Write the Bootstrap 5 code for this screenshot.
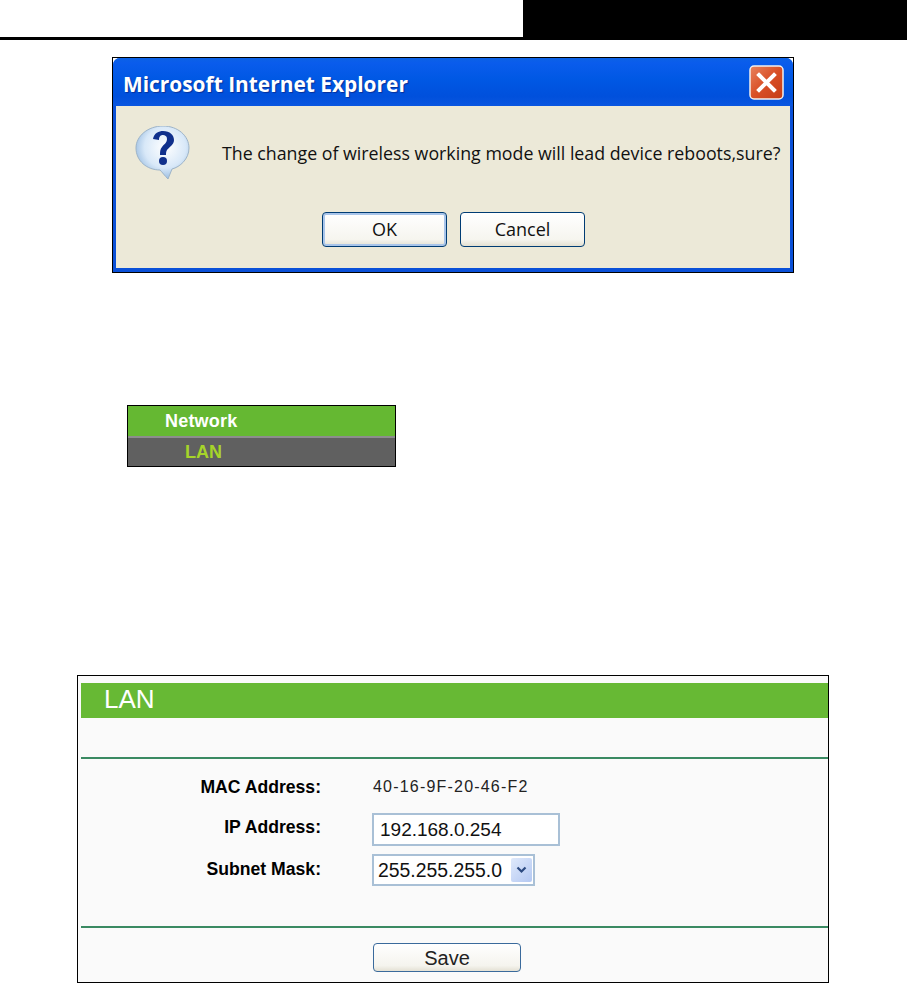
<!DOCTYPE html>
<html lang="en">
<head>
    <meta charset="UTF-8">
    <meta name="viewport" content="width=device-width, initial-scale=1.0">
    <title>LAN</title>
    <link href="https://cdn.jsdelivr.net/npm/bootstrap@5.3.0/dist/css/bootstrap.min.css" rel="stylesheet">
    <style>
        body { background: #fff; font-family: "Liberation Sans", Arial, sans-serif; color: #000; }

        /* page header of the manual */
        .page-head { height: 40px; border-bottom: 3px solid #000; }
        .page-head-block { width: 384px; height: 40px; background: #000; }

        /* XP dialog */
        .xp-frame { width: 682px; height: 216px; margin: 17px 0 0 112px; border: 1px solid #000; background: #fff; }
        .xp-window { height: 100%; border-radius: 7px 7px 0 0; background: #0a50d8; padding: 0 3px 3px; }
        .xp-title { height: 48px; margin: 0 -3px; padding: 0 9px 0 10px; border-radius: 7px 7px 0 0;
            background: linear-gradient(#0b62e6 0, #0a5cec 10%, #0058e4 45%, #0050dc 80%, #0a56e0 100%); }
        .xp-title-text { font-family: "Open Sans", sans-serif; font-weight: 700; font-size: 20.9px; color: #fff; text-shadow: 1px 1px 1px #06309a; margin-top: 6px; }
        .xp-close { width: 35px; height: 35px; display: block; }
        .xp-body { height: 162px; background: #ece9d8; padding: 20px 0 0 19px; }
        .xp-msg { font-family: "Open Sans", sans-serif; font-size: 17.8px; color: #111; margin: 15px 0 0 31px; white-space: nowrap; line-height: 24px; }
        .xp-actions { margin: 32px 0 0 187px; }
        .xp-btn { width: 125px; height: 35px; padding: 0; border: 1px solid #003c74; border-radius: 4px; font-family: "Open Sans", sans-serif; font-size: 18px; color: #111;
            background: linear-gradient(#fff, #f6f5ef 80%, #e3e0d2); }
        .xp-btn-default { box-shadow: inset 0 0 0 2px #a9c5ea; }
        .xp-gap { gap: 13px; }

        /* menu crop */
        .menu-crop { width: 269px; height: 62px; margin: 132px 0 0 127px; border: 1px solid #000; font-weight: 700; font-size: 18px; }
        .menu-top { height: 30px; background: #65b832; color: #fff; padding-left: 37px; line-height: 30px; letter-spacing: .2px; }
        .menu-sub { height: 30px; background: #606060; border-top: 2px solid #8d8d8d; color: #a6d42a; padding-left: 57px; line-height: 28px; }

        /* LAN panel */
        .lan-panel { width: 752px; height: 308px; margin: 208px 0 0 77px; border: 1px solid #000; background: #fafafa; padding: 7px 0 0 3px; }
        .lan-title { height: 35px; background: #67b934; color: #fff; font-size: 26px; line-height: 33px; padding-left: 23px; }
        .lan-rule { height: 2px; background: #3a8a62; border: 0; margin: 0; opacity: 1; }
        .lan-spacer { height: 39px; }
        .lan-fields { height: 167px; padding-top: 16px; }
        .lan-row { display: flex; align-items: center; }
        .lan-label { width: 240px; text-align: right; font-weight: 700; font-size: 17.6px; }
        .lan-value { margin-left: 52px; font-size: 16px; letter-spacing: 1.2px; color: #222; }
        .lan-row-mac { height: 24px; }
        .lan-row-ip { height: 33px; margin-top: 14px; }
        .lan-row-ip .lan-label { margin-top: -4px; }
        .lan-row-mask { height: 32px; margin-top: 8px; }
        .lan-row-mask .lan-label { margin-top: -2px; }
        .lan-input { margin-left: 51px; width: 188px; height: 33px; border: 2px solid #a9c0d6; background: #fff; font-size: 19px; padding: 0 6px; color: #111; line-height: 29px; }
        .lan-select { margin-left: 51px; width: 163px; height: 32px; border: 2px solid #a9c0d6; background: #fff; font-size: 19.4px; padding-left: 4px; color: #111; line-height: 28px; }
        .lan-arrow { width: 21px; height: 24px; margin-right: 1px; border-radius: 2px; background: linear-gradient(135deg, #dfe9fb, #b4c8f2); }
        .lan-actions { padding: 15px 0 0 292px; }
        .lan-save { width: 148px; height: 29px; padding: 0; border: 1px solid #3a6a9c; border-radius: 4px; font-size: 20px; color: #222; line-height: 26px;
            background: linear-gradient(#fff, #f5f4ee 80%, #e4e1d4); }
    </style>
</head>
<body class="m-0">
    <div class="page-head d-flex justify-content-end">
        <div class="page-head-block"></div>
    </div>

    <div class="xp-frame">
        <div class="xp-window">
            <div class="xp-title d-flex align-items-center justify-content-between">
                <span class="xp-title-text">Microsoft Internet Explorer</span>
                <svg class="xp-close" viewBox="0 0 35 35">
                    <defs>
                        <linearGradient id="closeFill" x1="0" y1="0" x2="1" y2="1">
                            <stop offset="0" stop-color="#e8835f"/>
                            <stop offset=".5" stop-color="#d94f26"/>
                            <stop offset="1" stop-color="#c43c16"/>
                        </linearGradient>
                    </defs>
                    <rect x="1" y="1" width="33" height="33" rx="4" fill="url(#closeFill)" stroke="#f2f0ee" stroke-width="1.5"/>
                    <path d="M10 10 L25 25 M25 10 L10 25" stroke="#fff" stroke-width="4" stroke-linecap="square"/>
                </svg>
            </div>
            <div class="xp-body">
                <div class="d-flex">
                    <svg width="56" height="54" viewBox="0 0 56 54" class="flex-shrink-0">
                        <defs>
                            <radialGradient id="bubbleFill" cx=".55" cy=".4" r=".65">
                                <stop offset="0" stop-color="#ffffff"/>
                                <stop offset=".6" stop-color="#d8e8f8"/>
                                <stop offset="1" stop-color="#8db4dc"/>
                            </radialGradient>
                        </defs>
                        <path d="M28 0 C43 0 54 10 54 22 C54 33 45 41 37 43 L33 53 C30 50 27 46 25 44 C12 44 1 35 1 22 C1 10 13 0 28 0 Z" fill="url(#bubbleFill)" stroke="#9eb4c8" stroke-width="1"/>
                        <path d="M18 13 C19 7 24 5 28 5 C35 5 39 9 39 14 C39 19 34 21 32 24 C31 26 31 27 31 29 L25 29 C25 26 25 23 27 21 C29 18 32 17 32 13 C32 10 30 9 28 9 C26 9 24 10 24 14 Z" fill="#10308c"/>
                        <circle cx="28" cy="35" r="4" fill="#10308c"/>
                    </svg>
                    <div class="xp-msg">The change of wireless working mode will lead device reboots,sure?</div>
                </div>
                <div class="d-flex xp-gap xp-actions">
                    <button type="button" class="xp-btn xp-btn-default">OK</button>
                    <button type="button" class="xp-btn">Cancel</button>
                </div>
            </div>
        </div>
    </div>

    <div class="menu-crop">
        <div class="menu-top">Network</div>
        <div class="menu-sub">LAN</div>
    </div>

    <div class="lan-panel">
        <div class="lan-title">LAN</div>
        <div class="lan-spacer"></div>
        <hr class="lan-rule">
        <div class="lan-fields">
            <div class="lan-row lan-row-mac">
                <span class="lan-label">MAC Address:</span>
                <span class="lan-value">40-16-9F-20-46-F2</span>
            </div>
            <div class="lan-row lan-row-ip">
                <span class="lan-label">IP Address:</span>
                <span class="lan-input">192.168.0.254</span>
            </div>
            <div class="lan-row lan-row-mask">
                <span class="lan-label">Subnet Mask:</span>
                <span class="lan-select d-flex align-items-center justify-content-between">
                    255.255.255.0
                    <span class="lan-arrow d-flex align-items-center justify-content-center">
                        <svg width="11" height="8" viewBox="0 0 11 8"><path d="M1.5 1.5 L5.5 5.5 L9.5 1.5" fill="none" stroke="#2c4a80" stroke-width="2.2"/></svg>
                    </span>
                </span>
            </div>
        </div>
        <hr class="lan-rule">
        <div class="lan-actions">
            <button type="button" class="lan-save">Save</button>
        </div>
    </div>

    <script src="https://cdn.jsdelivr.net/npm/bootstrap@5.3.0/dist/js/bootstrap.bundle.min.js"></script>
</body>
</html>
